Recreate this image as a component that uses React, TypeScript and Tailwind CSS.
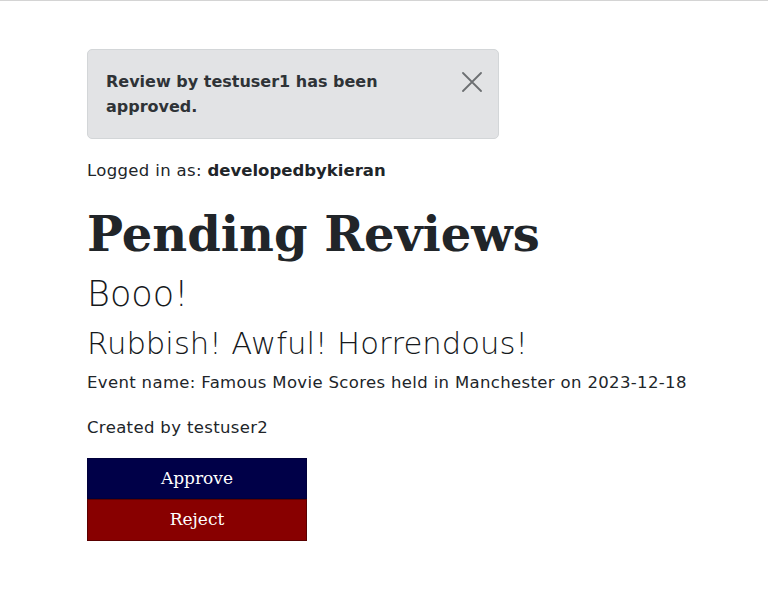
const body = "font-['DejaVu_Sans',sans-serif]";
const serif = "font-['DejaVu_Serif',serif]";

export default function App() {
  return (
    <div className={`min-h-[605px] border-t border-[#d4d4d4] bg-white text-[#212529] ${body}`}>
      <div className="pl-[87px] pr-[20px] pt-[48px]">
        {/* alert */}
        <div className="relative w-[412px] rounded-[5px] border border-[#d3d6d8] bg-[#e2e3e5] py-[19px] pl-[18px] pr-[60px] text-[16px] font-bold leading-[25px] text-[#2f3337]">
          Review by testuser1 has been approved.
          <button className="absolute right-[16px] top-[22px] text-[#6c6f72]">
            <svg width="20" height="20" viewBox="0 0 20 20" fill="none" stroke="currentColor" strokeWidth="1.8" strokeLinecap="round">
              <path d="M1 1L19 19M19 1L1 19" />
            </svg>
          </button>
        </div>

        <p className="mt-[20px] text-[16.5px] leading-[24px] tracking-[0.35px]">
          Logged in as: <span className="font-bold tracking-normal">developedbykieran</span>
        </p>

        <h1 className={`mt-[22px] text-[48px] font-bold leading-[58px] ${serif}`}>Pending Reviews</h1>

        <div className="mt-[11px] text-[35px] font-light leading-[40px] text-[#16191c]">Booo!</div>
        <div className="mt-[12px] text-[30.7px] font-light leading-[36px] text-[#16191c]">Rubbish! Awful! Horrendous!</div>
        <p className="mt-[9px] whitespace-nowrap text-[16.5px] leading-[24px] tracking-[0.35px]">
          Event name: Famous Movie Scores held in Manchester on 2023-12-18
        </p>
        <p className="mt-[21px] text-[16.5px] leading-[24px] tracking-[0.35px]">Created by testuser2</p>

        <div className="mt-[18px] flex w-[220px] flex-col">
          <button className={`h-[41px] border border-[#00003a] bg-[#000048] text-[17px] text-white ${serif}`}>
            Approve
          </button>
          <button className={`h-[42px] border border-[#5a0000] bg-[#880000] text-[17px] text-white ${serif}`}>
            Reject
          </button>
        </div>
      </div>
    </div>
  );
}
